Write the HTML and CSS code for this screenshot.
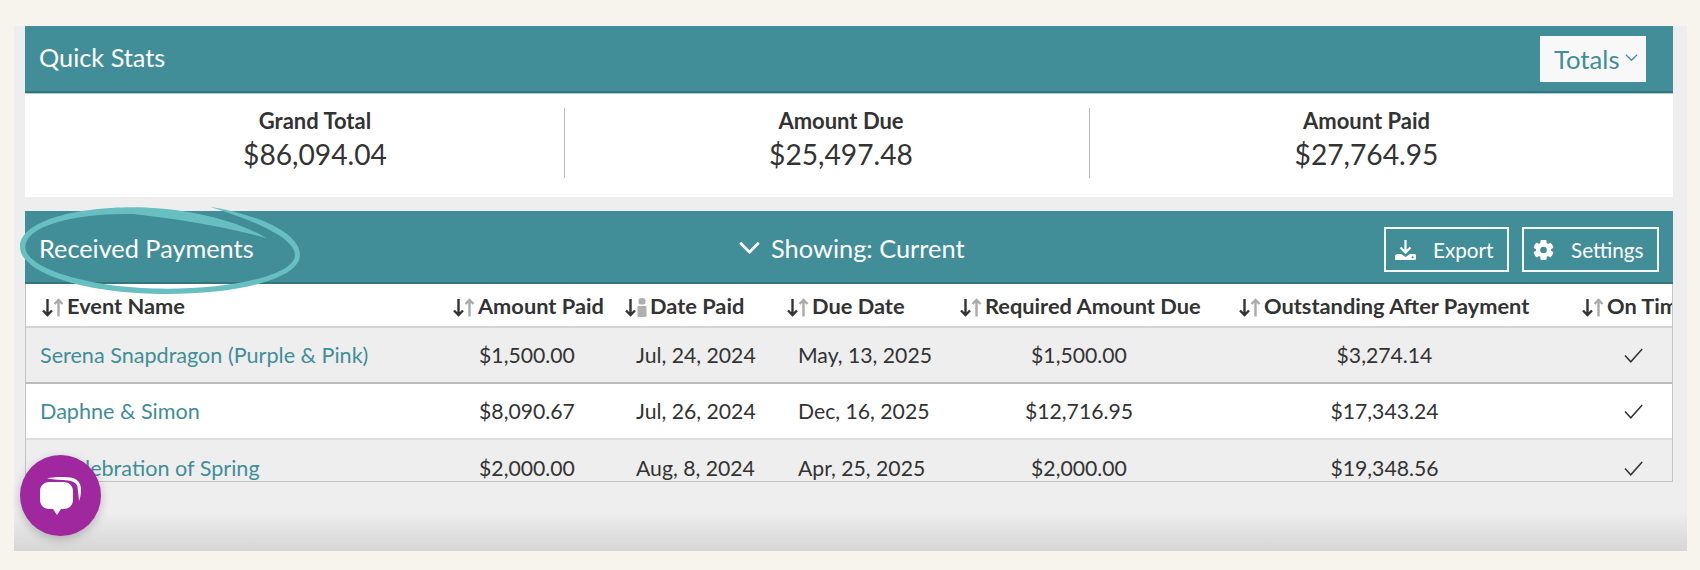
FILE: index.html
```html
<!DOCTYPE html>
<html lang="en">
<head>
<meta charset="utf-8">
<title>Received Payments</title>
<link rel="stylesheet" href="styles.css">
</head>
<body>
<svg width="0" height="0" class="defs">
  <symbol id="sort" viewBox="0 0 22 19">
    <path d="M5.500 1v16M1 12.500 5.500 17l4.500-4.500" fill="none" stroke="#333" stroke-width="2.400"/>
    <path d="M16.500 18.500V2M12.500 6 16.500 2l4 4" fill="none" stroke="#aaa" stroke-width="2.400"/>
  </symbol>
  <symbol id="sort-date" viewBox="0 0 22 19">
    <path d="M5.500 1v16M1 12.500 5.500 17l4.500-4.500" fill="none" stroke="#333" stroke-width="2.400"/>
    <rect x="13.500" y="0" width="7" height="6.500" rx="2.500" fill="#b0b0b0"/>
    <rect x="12.500" y="8" width="9" height="11" rx="1" fill="#b0b0b0"/>
  </symbol>
  <symbol id="check" viewBox="0 0 19 15">
    <path d="M1 7.500 6.800 13.800 18.200 1" fill="none" stroke="#333" stroke-width="1.500"/>
  </symbol>
</svg>
<main class="panel">
  <section class="bar stats-bar">
    <h2 class="bar-title">Quick Stats</h2>
    <button class="totals">Totals<svg class="totals-caret" viewBox="0 0 14 9"><path d="M1 1.500 7 7.500l6-6" fill="none" stroke="#418e98" stroke-width="1.300"/></svg></button>
  </section>
  <section class="stats">
    <div class="stat stat-a"><div class="stat-label">Grand Total</div><div class="stat-value">$86,094.04</div></div>
    <div class="stat stat-b"><div class="stat-label">Amount Due</div><div class="stat-value">$25,497.48</div></div>
    <div class="stat stat-c"><div class="stat-label">Amount Paid</div><div class="stat-value">$27,764.95</div></div>
  </section>
  <section class="bar pay-bar">
    <h2 class="bar-title pay-title">Received Payments</h2>
    <div class="showing"><svg class="showing-caret" viewBox="0 0 24 14"><path d="M2 2l10 10L22 2" fill="none" stroke="#fff" stroke-width="3"/></svg>Showing: Current</div>
    <div class="actions">
      <button class="btn btn-export"><svg class="btn-icon" viewBox="0 0 21 20"><path d="M10.500 0v12M5.500 7.500l5 5 5-5" fill="none" stroke="#fff" stroke-width="2.200"/><path d="M1.500 14h4.500l4.500 3 4.500-3h4.500a1.500 1.500 0 0 1 1.500 1.500v3a1.500 1.500 0 0 1-1.500 1.500H1a1 1 0 0 1-1-1v-3a1.500 1.500 0 0 1 1.500-1.500z" fill="#fff"/><circle cx="17.500" cy="17.200" r="1" fill="#418e98"/></svg>Export</button>
      <button class="btn btn-settings"><svg class="btn-icon" viewBox="44 44 424 424"><path fill="#fff" fill-rule="evenodd" d="M495 298l-43-25a195 195 0 0 0 0-34l43-25c5-3 7-9 6-14-11-36-30-69-55-96-4-4-10-5-15-2l-43 25a190 190 0 0 0-29-17V60c0-6-4-11-10-12-37-8-75-8-112 0-6 1-10 6-10 12v50a190 190 0 0 0-29 17L155 102c-5-3-11-2-15 2-25 27-44 60-55 96-1 5 1 11 6 14l43 25a195 195 0 0 0 0 34l-43 25c-5 3-7 9-6 14 11 36 30 69 55 96 4 4 10 5 15 2l43-25a190 190 0 0 0 29 17v50c0 6 4 11 10 12 37 8 75 8 112 0 6-1 10-6 10-12v-50a190 190 0 0 0 29-17l43 25c5 3 11 2 15-2 25-27 44-60 55-96 1-5-1-11-6-14zM293 326a70 70 0 1 1 0-140 70 70 0 0 1 0 140z" transform="translate(-37 0)"/></svg>Settings</button>
    </div>
  </section>
  <div class="table-wrap">
    <table class="pay-table">
      <colgroup>
        <col class="c1"><col class="c2"><col class="c3"><col class="c4"><col class="c5"><col class="c6"><col class="c7">
      </colgroup>
      <thead>
        <tr>
          <th class="h1"><svg class="sort"><use href="#sort"/></svg>Event Name</th>
          <th class="h2"><svg class="sort"><use href="#sort"/></svg>Amount Paid</th>
          <th class="h3"><svg class="sort"><use href="#sort-date"/></svg>Date Paid</th>
          <th class="h4"><svg class="sort"><use href="#sort"/></svg>Due Date</th>
          <th class="h5"><svg class="sort"><use href="#sort"/></svg>Required Amount Due</th>
          <th class="h6"><svg class="sort"><use href="#sort"/></svg>Outstanding After Payment</th>
          <th class="h7"><svg class="sort"><use href="#sort"/></svg>On Time</th>
        </tr>
      </thead>
      <tbody>
        <tr class="odd">
          <td class="name"><a href="#">Serena Snapdragon (Purple &amp; Pink)</a></td>
          <td>$1,500.00</td><td class="paid">Jul, 24, 2024</td><td class="due">May, 13, 2025</td><td class="req">$1,500.00</td><td>$3,274.14</td>
          <td class="ontime"><svg class="check"><use href="#check"/></svg></td>
        </tr>
        <tr>
          <td class="name"><a href="#">Daphne &amp; Simon</a></td>
          <td>$8,090.67</td><td class="paid">Jul, 26, 2024</td><td class="due">Dec, 16, 2025</td><td class="req">$12,716.95</td><td>$17,343.24</td>
          <td class="ontime"><svg class="check"><use href="#check"/></svg></td>
        </tr>
        <tr class="odd">
          <td class="name"><a href="#">A Celebration of Spring</a></td>
          <td>$2,000.00</td><td class="paid">Aug, 8, 2024</td><td class="due">Apr, 25, 2025</td><td class="req">$2,000.00</td><td>$19,348.56</td>
          <td class="ontime"><svg class="check"><use href="#check"/></svg></td>
        </tr>
      </tbody>
    </table>
  </div>
  <svg class="oval" viewBox="0 0 960 390"><path fill="#68bfc1" d="M630 50C780 75 900 130 900 195C900 265 720 312 500 312C260 312 60 250 60 170C60 95 220 52 400 52C540 52 700 85 800 145C690 112 540 88 400 72C230 68 78 105 76 170C74 235 270 296 500 296C700 296 885 255 885 195C885 150 790 100 630 50Z"/></svg>
  <button class="chat" aria-label="Chat"><svg viewBox="0 0 45 42" class="chat-icon"><path fill="#fff" d="M9 3.500C16 1.500 28 1.500 35 3C40 4.500 43 9 43 14C43 18 42.500 23 41 26C40.500 20 40 16 39.500 12C38.500 8 35 6 30 5.500C24 5 16 4.500 9 3.500Z"/><path fill="#fff" d="M11 7h15c5 0 9 4 9 9v9c0 5-4 9-9 9h-3l-4 6-4-6h-4c-5 0-9-4-9-9v-9c0-5 4-9 9-9z"/></svg></button>
</main>
</body>
</html>
```
FILE: styles.css
```css
* { box-sizing: border-box; }
html, body { margin: 0; padding: 0; }
body {
  width: 1700px;
  height: 570px;
  background: #f7f3ed;
  font-family: Lato, "Noto Sans", sans-serif;
  color: #333;
  overflow: hidden;
  padding: 26px 13px 19px 14px;
}
.defs { position: absolute; }
.panel {
  position: relative;
  height: 525px;
  padding: 0 14px 0 11px;
  background: linear-gradient(to bottom, #eee 0, #eee 485px, #d6d6d6 100%);
}
.bar {
  display: flex;
  align-items: center;
  background: #418e98;
  border-bottom: 2px solid #36757e;
  color: #fff;
}
.bar-title { margin: 2px 0 0; font-size: 25.300px; font-weight: 400; color: #fff; }
.stats-bar {
  height: 67px;
  padding: 0 27px 5px 14px;
  justify-content: space-between;
}
.totals {
  display: flex;
  align-items: center;
  width: 106px;
  height: 46px;
  padding: 0 0 0 14px;
  margin-top: 5px;
  background: #f8f8f8;
  border: 0;
  color: #418e98;
  font: 400 25.700px Lato, sans-serif;
}
.totals-caret { width: 13px; height: 9px; margin-left: 5px; margin-top: -3px; }
.stats {
  display: flex;
  height: 104px;
  padding-top: 14px;
  background: #fff;
  margin-bottom: 14px;
  border-top: 1px solid #a6cfd3;
}
.stat { height: 70px; text-align: center; }
.stat-a { width: 540px; padding-left: 41px; border-right: 1px solid #bbb; }
.stat-b { width: 525px; padding-left: 28px; border-right: 1px solid #bbb; }
.stat-c { width: 583px; padding-right: 30px; }
.stat-label { font-size: 22px; font-weight: 700; line-height: 26px; }
.stat-value { font-size: 28.200px; line-height: 40px; }
.pay-bar { position: relative; height: 73px; padding: 0 14px; }
.pay-title { width: 480px; }
.showing { display: flex; align-items: center; font-size: 25.400px; margin: 2px 0 0 219px; }
.showing-caret { width: 23px; height: 13px; margin-right: 10px; }
.actions { margin: 6px 0 0 auto; display: flex; gap: 13px; }
.btn {
  display: flex;
  align-items: center;
  height: 45px;
  padding: 0 9px;
  background: transparent;
  border: 2px solid #f4f8f8;
  color: #fff;
  font: 400 20.700px Lato, sans-serif;
}
.btn-export { width: 125px; }
.btn-settings { width: 137px; }
.btn-icon { width: 21px; height: 20px; margin-right: 17px; flex: none; }
.table-wrap {
  width: 1648px;
  height: 198px;
  overflow: hidden;
  border-left: 1px solid #c4c4c4;
  border-right: 1px solid #c4c4c4;
  border-bottom: 1px solid #c4c4c4;
  background: #eee;
}
.pay-table {
  table-layout: fixed;
  width: 1673px;
  border-collapse: collapse;
  font-size: 21.200px;
}
.c1 { width: 412px; } .c2 { width: 178px; } .c3 { width: 160px; } .c4 { width: 178px; }
.c5 { width: 243px; } .c6 { width: 375px; } .c7 { width: 127px; }
thead tr { height: 43px; background: #fff; border-bottom: 2px solid #d4d4d4; }
th { padding: 1px 0 0; text-align: left; font-size: 21.800px; font-weight: 700; white-space: nowrap; }
.sort { width: 22px; height: 19px; margin-right: 3px; vertical-align: -3px; }
.h1 { padding-left: 16px; } .h2 { padding-left: 15px; } .h3 { padding-left: 9px; }
.h4 { padding-left: 11px; } .h5 { padding-left: 6px; } .h6 { padding-left: 42px; } .h7 { padding-left: 10px; }
tbody tr { height: 56px; background: #fff; border-bottom: 2px solid #ddd; }
tbody tr.odd { background: #eee; border-bottom: 2px solid #bdbdbd; }
tbody tr:last-child { border-bottom: 0; }
td { padding: 0; text-align: center; white-space: nowrap; }
td.name { text-align: left; padding-left: 14px; font-size: 21.600px; }
td.name a { color: #418e98; text-decoration: none; }
td.paid { text-align: left; padding-left: 20px; }
td.due { text-align: left; padding-left: 22px; }
td.req { padding-left: 7px; }
td.ontime { padding-right: 4px; }
.check { width: 19px; height: 15px; vertical-align: 0; }
.oval { position: absolute; left: -14px; top: 164px; width: 320px; height: 130px; pointer-events: none; }
.chat {
  position: absolute;
  left: 6px;
  top: 429px;
  width: 81px;
  height: 81px;
  padding: 0;
  border: 0;
  border-radius: 50%;
  background: #a0289f;
  box-shadow: 0 3px 10px rgba(0,0,0,.22);
  display: flex;
  align-items: center;
  justify-content: center;
}
.chat-icon { width: 45px; height: 42px; flex: none; }
```
